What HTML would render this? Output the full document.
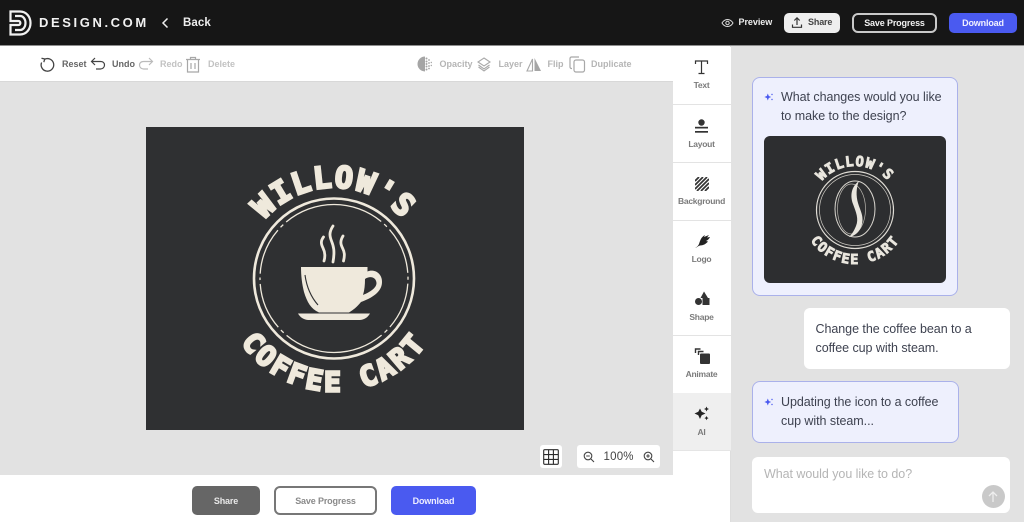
<!DOCTYPE html>
<html><head><meta charset="utf-8">
<style>
*{box-sizing:border-box;margin:0;padding:0}
html,body{width:1024px;height:522px;overflow:hidden;background:#e2e2e2;font-family:"Liberation Sans",sans-serif}
.a{position:absolute}
.t{position:absolute;white-space:nowrap;font-weight:700}
.tb{font-size:9px;letter-spacing:0;top:59px;line-height:11px}
.side{position:absolute;left:673px;width:58px;height:58px;border-bottom:1px solid #e3e3e3;background:#fff}
.side span{position:absolute;left:0;width:57px;text-align:center;top:35px;font-size:8.5px;font-weight:700;color:#7b7b7b;letter-spacing:-.25px;line-height:11px}
.side svg{position:absolute;left:17px;top:10px}
.chat{position:absolute;font-size:12.5px;line-height:19px;color:#3e4250;letter-spacing:-.05px;white-space:nowrap}
.btn{position:absolute;display:flex;align-items:center;justify-content:center;font-weight:700;font-size:9px;letter-spacing:-.15px}
</style></head><body>
<div class="a" style="left:0;top:0;width:1024px;height:522px;background:#e2e2e2"></div>

<!-- header -->
<div class="a" style="left:0;top:0;width:1024px;height:45px;background:#161616"></div>
<div class="a" style="left:0;top:45px;width:1024px;height:1px;background:#8e8e8e"></div>
<svg class="a" style="left:0;top:0" width="36" height="45" viewBox="0 0 36 45" fill="none" stroke="#f2f2f2" stroke-width="2.2"><path d="M10.500 11.500H20C26.500 11.500 30.500 17 30.500 23S26.500 34.500 20 34.500H10.500V25H18.500C21 25 21 21 18.500 21H10.500z"/><path d="M15 16H20C23.500 16 25.500 19.500 25.500 23S23.500 30 20 30H15"/></svg>
<div class="t" style="left:39px;top:15px;font-size:13px;line-height:16px;letter-spacing:2.6px;color:#f2f2f2;font-weight:700">DESIGN.COM</div>
<svg class="a" style="left:161px;top:17px" width="8" height="12" viewBox="0 0 8 12" fill="none" stroke="#eee" stroke-width="1.500"><path d="M6.500 1.500 2 6l4.500 4.500"/></svg>
<div class="t" style="left:183px;top:16px;font-size:11.500px;line-height:15px;letter-spacing:.1px;color:#eee">Back</div>

<svg class="a" style="left:721px;top:18px" width="13" height="10" viewBox="0 0 13 10" fill="none" stroke="#ddd" stroke-width="1"><path d="M1 5c2.800-4.700 8.200-4.700 11 0-2.800 4.700-8.200 4.700-11 0z"/><circle cx="6.500" cy="5" r="1.700"/></svg>
<div class="t" style="left:738.500px;top:17px;font-size:9px;line-height:11px;letter-spacing:-.05px;color:#eee">Preview</div>
<div class="a" style="left:784px;top:13px;width:56px;height:20px;border-radius:5px;background:#eeeeee"></div>
<svg class="a" style="left:791px;top:16px" width="12" height="13" viewBox="0 0 12 13" fill="none" stroke="#333" stroke-width="1.200"><path d="M6 9V2M3.300 4.500 6 1.800l2.700 2.700M1.500 8.500v2.800h9V8.500"/></svg>
<div class="t" style="left:808px;top:17px;font-size:9px;line-height:11px;letter-spacing:-.15px;color:#444">Share</div>
<div class="btn" style="left:852px;top:13px;width:85px;height:20px;border:2px solid #c9c9c9;border-radius:6px;color:#f2f2f2">Save Progress</div>
<div class="btn" style="left:949px;top:13px;width:68px;height:20px;border-radius:5px;background:#4a5af0;color:#f0f0ff">Download</div>

<!-- toolbar -->
<div class="a" style="left:0;top:46px;width:673px;height:36px;background:#fff;border-bottom:1px solid #d8d8d8"></div>
<svg class="a" style="left:39px;top:56px" width="17" height="17" viewBox="0 0 17 17" fill="none" stroke="#444" stroke-width="1.300"><path d="M5.500 3.300A6.300 6.300 0 1 1 2.600 6.500"/><path d="M2.500 2.200 5.800 3l-1 3.200"/></svg>
<div class="t tb" style="left:62px;color:#666">Reset</div>
<svg class="a" style="left:90px;top:57px" width="16" height="14" viewBox="0 0 16 14" fill="none" stroke="#444" stroke-width="1.200"><path d="M5 1 1.500 4.500 5 8M1.500 4.500h9c2.500 0 4 1.500 4 3.500s-1.500 4-4 4H6"/></svg>
<div class="t tb" style="left:112px;color:#666">Undo</div>
<svg class="a" style="left:138px;top:57px" width="16" height="14" viewBox="0 0 16 14" fill="none" stroke="#bbb" stroke-width="1.200"><path d="M11 1l3.500 3.500L11 8M14.500 4.500h-9c-2.500 0-4 1.500-4 3.500s1.500 4 4 4H10"/></svg>
<div class="t tb" style="left:160px;color:#c2c2c2">Redo</div>
<svg class="a" style="left:185px;top:56px" width="16" height="17" viewBox="0 0 16 17" fill="none" stroke="#a8a8a8" stroke-width="1.200"><path d="M1 3.500h14M5.500 3.500V1.500h5v2M2.500 3.500v12.500h11V3.500M6 7v6M10 7v6"/></svg>
<div class="t tb" style="left:208px;color:#c2c2c2">Delete</div>
<svg class="a" style="left:417px;top:56px" width="16" height="16" viewBox="0 0 16 16"><path d="M8 .5a7.500 7.500 0 0 0 0 15z" fill="#a5a5a5"/><g fill="#a5a5a5"><circle cx="9.500" cy="2.500" r="1"/><circle cx="9.500" cy="5.500" r="1"/><circle cx="9.500" cy="8" r="1"/><circle cx="9.500" cy="10.500" r="1"/><circle cx="9.500" cy="13.500" r="1"/><circle cx="12" cy="4" r=".9"/><circle cx="12" cy="7" r=".9"/><circle cx="12" cy="10" r=".9"/><circle cx="12" cy="12.500" r=".9"/><circle cx="14.300" cy="6.500" r=".7"/><circle cx="14.300" cy="9.500" r=".7"/></g></svg>
<div class="t tb" style="left:439.500px;color:#b5b5b5">Opacity</div>
<svg class="a" style="left:477px;top:57px" width="14" height="15" viewBox="0 0 14 15" fill="none" stroke="#a8a8a8" stroke-width="1.100"><path d="M7 1 13 5 7 9 1 5z"/><path d="M1.500 8 7 12l5.500-4"/><path d="M1.500 10 7 14l5.500-4"/></svg>
<div class="t tb" style="left:498.500px;color:#b5b5b5">Layer</div>
<svg class="a" style="left:526px;top:57px" width="16" height="15" viewBox="0 0 16 15"><path d="M6.500 2 1 14h5.500z" fill="none" stroke="#a8a8a8" stroke-width="1.100"/><path d="M8.500 1l6.500 13H8.500z" fill="#a5a5a5"/></svg>
<div class="t tb" style="left:547.500px;color:#b5b5b5">Flip</div>
<svg class="a" style="left:569px;top:56px" width="17" height="17" viewBox="0 0 17 17" fill="none" stroke="#a8a8a8" stroke-width="1.200"><path d="M3 12.500H2.500A1.500 1.500 0 0 1 1 11V2.500A1.500 1.500 0 0 1 2.500 1H10"/><rect x="5" y="4" width="10.500" height="12" rx="2"/></svg>
<div class="t tb" style="left:591px;color:#b5b5b5">Duplicate</div>

<!-- canvas -->
<div class="a" style="left:0;top:82px;width:673px;height:393px;background:#e2e2e2"></div>
<svg class="a" style="left:146px;top:127px" width="378" height="303" viewBox="146 127 378 303">
<rect x="146" y="127" width="378" height="303" fill="#2f3032"/>
<defs>
<path id="top" d="M243 278.500A91 91 0 0 1 425 278.500"/>
<path id="bot" d="M221 278.500A113 113 0 0 0 447 278.500"/>
</defs>
<text font-family="'DejaVu Sans Mono',monospace" font-weight="700" font-size="30" fill="#efe9dc" stroke="#efe9dc" stroke-width="2.400" stroke-linejoin="miter" letter-spacing="1.700" text-anchor="middle"><textPath href="#top" startOffset="50%">WILLOW'S</textPath></text>
<text font-family="'DejaVu Sans Mono',monospace" font-weight="700" font-size="28" fill="#efe9dc" stroke="#efe9dc" stroke-width="2.400" stroke-linejoin="miter" letter-spacing="3.050" text-anchor="middle"><textPath href="#bot" startOffset="50%">COFFEE CART</textPath></text>
<circle cx="334" cy="278.500" r="80" fill="none" stroke="#efe9dc" stroke-width="2.600"/>
<circle cx="334" cy="278.500" r="74" fill="none" stroke="#efe9dc" stroke-width="1.300" pathLength="360" stroke-dasharray="2 3 37 3 3 3 80 3 3 3 37 3" stroke-dashoffset="1"/>
<!-- steam -->
<g fill="none" stroke="#efe9dc" stroke-width="2.800" stroke-linecap="round">
<path d="M323.500 237c-3 4-2.500 7-.5 11s2.500 8 1 13"/><path d="M333 226c-4 6-3.500 10-1.500 15s3.500 10 1.500 21"/><path d="M343 236c-3 5-2.500 8-.5 12s2.500 7 1 13"/>
</g>
<!-- cup -->
<path fill="#efe9dc" d="M301 267H367.500V271.500C373 269 382 272 382 282C382 292 372 298 361 302C357 307 353 310 349 312.500H319C311 309 307 302 304 292C302 284 301 276 301 267z"/>
<path fill="#2f3032" d="M365 279C370 275.500 376 277 376.500 283C376.500 288 370 292 363 295C364.500 290 365 285 365 279z"/>
<path d="M305 275c1.500 11 6 22 13 30" fill="none" stroke="#2f3032" stroke-width="1.100"/>
<path fill="#efe9dc" d="M298 313.500H370C368 317 365 319.500 360 320H308C303 319.500 300 317 298 313.500z"/>
</svg>
<div class="a" style="left:540px;top:445px;width:22px;height:23px;background:#fff;border-radius:3px"></div>
<svg class="a" style="left:543px;top:449px" width="16" height="16" viewBox="0 0 16 16" fill="none" stroke="#2a2a2a" stroke-width="1.100"><rect x=".7" y=".7" width="14.600" height="14.600" rx="1"/><path d="M5.600 .7v14.600M10.400 .7v14.600M.7 5.600h14.600M.7 10.400h14.600"/></svg>
<div class="a" style="left:577px;top:445px;width:83px;height:23px;background:#fff;border-radius:3px"></div>
<svg class="a" style="left:582.500px;top:451px" width="12" height="12" viewBox="0 0 12 12" fill="none" stroke="#444" stroke-width="1.100"><circle cx="5" cy="5" r="3.800"/><path d="M8 8l3 3M3.200 5h3.600"/></svg>
<div class="t" style="left:603.500px;top:450px;font-size:11.500px;line-height:14px;font-weight:400;color:#444;letter-spacing:.2px">100%</div>
<svg class="a" style="left:643px;top:451px" width="12" height="12" viewBox="0 0 12 12" fill="none" stroke="#444" stroke-width="1.100"><circle cx="5" cy="5" r="3.800"/><path d="M8 8l3 3M3.200 5h3.600M5 3.200v3.600"/></svg>

<!-- bottom bar -->
<div class="a" style="left:0;top:475px;width:673px;height:47px;background:#fff"></div>
<div class="btn" style="left:192px;top:486px;width:68px;height:29px;border-radius:5px;background:#666;color:#e8e8e8">Share</div>
<div class="btn" style="left:274px;top:486px;width:103px;height:29px;border-radius:6px;border:2px solid #777;color:#8a8a8a;background:#fff">Save Progress</div>
<div class="btn" style="left:391px;top:486px;width:85px;height:29px;border-radius:5px;background:#4a5af0;color:#eef">Download</div>

<!-- sidebar -->
<div class="a" style="left:673px;top:46px;width:58px;height:476px;background:#fff;border-right:1px solid #ddd"></div>
<div class="side" style="top:47px"><svg style="top:12px;left:20px" width="17" height="17" viewBox="0 0 17 17" fill="none" stroke="#333" stroke-width="1.200"><path d="M2.500 5V2h12v3M8.500 2v12.500M5.500 14.500h6"/></svg><span style="top:33px">Text</span></div>
<div class="side" style="top:105px"><svg style="left:19px;top:12px" width="20" height="18" viewBox="0 0 20 18"><circle cx="9.500" cy="5.500" r="3.200" fill="#333"/><rect x="3" y="9.800" width="13" height="1.700" fill="#333"/><rect x="3" y="14" width="13" height="1.700" fill="#333"/></svg><span style="top:34px">Layout</span></div>
<div class="side" style="top:163px"><svg style="left:22px;top:14px" width="14" height="14" viewBox="0 0 14 14" stroke="#333" stroke-width="1.700"><path d="M0 4 4 0M0 8 8 0M0 12 12 0M2 14 14 2M6 14l8-8M10 14l4-4"/></svg><span style="top:33px">Background</span></div>
<div class="side" style="top:221px"><svg style="left:20px;top:12px" width="18" height="16" viewBox="0 0 18 16"><path fill="#222" d="M2 15c2-1 3-2 4-4 1-3 2-7 6-9l-1 2 5-2-2 2.500 3-.5c-1 2-2 3-4 4l2 .5c-2 2.500-5 4-8 4-2 .5-3 2-5 2.500z"/></svg><span style="top:33px">Logo</span></div>
<div class="side" style="top:278px"><svg style="left:21px;top:13px" width="17" height="15" viewBox="0 0 17 15" fill="#333"><path d="M10 .5 14 7H6.500z"/><circle cx="4.500" cy="10.500" r="3.500"/><rect x="8.500" y="7" width="7" height="7"/></svg><span style="top:34px">Shape</span></div>
<div class="side" style="top:336px"><svg style="left:20px;top:11px" width="18" height="18" viewBox="0 0 18 18"><rect x="7" y="6.500" width="10" height="10.500" rx="1" fill="#333"/><path d="M5.500 8V4.500h5M2.500 6V2h5" fill="none" stroke="#333" stroke-width="1.400"/></svg><span style="top:33px">Animate</span></div>
<div class="side" style="top:393px;background:#efefef;border-bottom:1px solid #e5e5e5"><svg style="left:21px;top:13px" width="16" height="15" viewBox="0 0 16 15" fill="#222"><path d="M6 2.500 7.700 5.800 11.500 7.500 7.700 9.200 6 13 4.300 9.200 .5 7.500 4.300 5.800z"/><path d="M12.500 .5l.8 1.700 1.700.8-1.700.8-.8 1.700-.8-1.700-1.700-.8 1.700-.8zM12.500 10l.7 1.400 1.400.7-1.400.7-.7 1.400-.7-1.400-1.400-.7 1.400-.7z"/></svg><span style="top:34px">AI</span></div>

<!-- chat -->
<div class="a" style="left:752px;top:77px;width:206px;height:219px;background:#eef0fd;border:1px solid #aab1ea;border-radius:8px"></div>
<svg class="a" style="left:764px;top:92px" width="10" height="10" viewBox="0 0 10 10" fill="#4a5af0"><path d="M3.800 1.500 4.800 4l2.400 1-2.400 1-1 2.500-1-2.500L.4 5l2.400-1z"/><circle cx="8" cy="2.500" r=".7"/><circle cx="8" cy="7.500" r=".7"/></svg>
<div class="chat" style="left:781px;top:88px">What changes would you like<br>to make to the design?</div>
<svg class="a" style="left:764px;top:136px" width="182" height="147" viewBox="764 136 182 147">
<rect x="764" y="136" width="182" height="147" rx="6" fill="#2d2e30"/>
<defs><path id="t2" d="M811 210A44 44 0 0 1 899 210"/><path id="b2" d="M801 210A54 54 0 0 0 909 210"/></defs>
<text font-family="'DejaVu Sans Mono',monospace" font-weight="700" font-size="14" fill="#e9e6de" stroke="#e9e6de" stroke-width=".9" letter-spacing="1" text-anchor="middle"><textPath href="#t2" startOffset="50%">WILLOW'S</textPath></text>
<text font-family="'DejaVu Sans Mono',monospace" font-weight="700" font-size="13.500" fill="#e9e6de" stroke="#e9e6de" stroke-width=".9" letter-spacing="1.400" text-anchor="middle"><textPath href="#b2" startOffset="50%">COFFEE CART</textPath></text>
<circle cx="855" cy="210" r="38.500" fill="none" stroke="#e0ddd6" stroke-width="1.200"/>
<circle cx="855" cy="210" r="35.500" fill="none" stroke="#cfccc5" stroke-width=".7"/>
<ellipse cx="855" cy="209" rx="20" ry="28" fill="none" stroke="#d8d5ce" stroke-width="1"/>
<ellipse cx="851.500" cy="209" rx="14" ry="25" fill="none" stroke="#b8b5ae" stroke-width=".7"/>
<path d="M859 181C851 187 850 196 853 204C856 212 859 219 856 226C854 231 852 234 849 237C855 236 860 232 862 224C864 216 860 210 858 203C856 196 856 188 859 181z" fill="#e9e6de"/>
</svg>

<div class="a" style="left:804px;top:308px;width:206px;height:61px;background:#fff;border-radius:6px"></div>
<div class="chat" style="left:815.500px;top:319.500px">Change the coffee bean to a<br>coffee cup with steam.</div>

<div class="a" style="left:752px;top:381px;width:207px;height:62px;background:#eef0fd;border:1px solid #aab1ea;border-radius:8px"></div>
<svg class="a" style="left:764px;top:397px" width="10" height="10" viewBox="0 0 10 10" fill="#4a5af0"><path d="M3.800 1.500 4.800 4l2.400 1-2.400 1-1 2.500-1-2.500L.4 5l2.400-1z"/><circle cx="8" cy="2.500" r=".7"/><circle cx="8" cy="7.500" r=".7"/></svg>
<div class="chat" style="left:781px;top:393px">Updating the icon to a coffee<br>cup with steam...</div>

<div class="a" style="left:752px;top:457px;width:258px;height:56px;background:#fff;border-radius:6px"></div>
<div class="chat" style="left:764px;top:464.500px;color:#b5b5b5">What would you like to do?</div>
<div class="a" style="left:981.500px;top:485px;width:23px;height:23px;border-radius:50%;background:#c9c9c9"></div>
<svg class="a" style="left:987px;top:490px" width="12" height="13" viewBox="0 0 12 13" fill="none" stroke="#eee" stroke-width="1.300"><path d="M6 12V2M2 6l4-4 4 4"/></svg>
</body></html>
